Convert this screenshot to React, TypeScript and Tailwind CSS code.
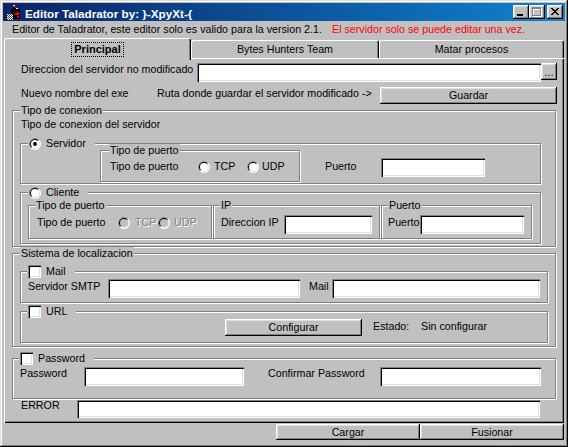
import React from "react";

const sunken =
  "bg-white shadow-[inset_1px_1px_0_#808080,inset_2px_2px_0_#000,inset_-1px_-1px_0_#fff,inset_-2px_-2px_0_#dfdfdf]";
const raised =
  "bg-[#c0c0c0] shadow-[inset_-1px_-1px_0_#000,inset_1px_1px_0_#fff,inset_-2px_-2px_0_#808080,inset_2px_2px_0_#dfdfdf]";
const disabledText = "text-[#808080] [text-shadow:1px_1px_0_#fff]";

function TextBox({ className }: { className: string }) {
  return <div className={`${sunken} shrink-0 ${className}`} />;
}

function Button({ label, className }: { label: string; className: string }) {
  return (
    <div className={`${raised} shrink-0 flex items-center justify-center ${className}`}>
      {label}
    </div>
  );
}

function Radio({ on = false, disabled = false }: { on?: boolean; disabled?: boolean }) {
  return (
    <svg width="12" height="12" viewBox="0 0 12 12" className="shrink-0">
      <circle cx="6" cy="6" r="6" fill="#fff" />
      <path d="M1.757 10.243A6 6 0 0 1 10.243 1.757Z" fill="#808080" />
      <circle cx="6" cy="6" r="5" fill="#dfdfdf" />
      <path d="M2.464 9.536A5 5 0 0 1 9.536 2.464Z" fill="#000" />
      <circle cx="6" cy="6" r="4" fill={disabled ? "#c0c0c0" : "#fff"} />
      {on && <circle cx="6" cy="6" r="2" fill="#000" />}
    </svg>
  );
}

function Check() {
  return <span className={`block w-[13px] h-[13px] shrink-0 ${sunken}`} />;
}

function Frame(props: {
  legend: React.ReactNode;
  className: string;
  legendClass?: string;
  children?: React.ReactNode;
}) {
  return (
    <fieldset
      className={`shrink-0 border border-[#808080] shadow-[inset_1px_1px_0_#fff,1px_1px_0_#fff] ${props.className}`}
    >
      <legend className={`${props.legendClass || "ml-[6px]"} px-[1px] bg-[#c0c0c0] leading-[13px]`}>
        {props.legend}
      </legend>
      {props.children}
    </fieldset>
  );
}

function ControlLegend({ box, text }: { box: React.ReactNode; text: string }) {
  return (
    <span className="flex items-center h-[13px] pr-[8px]">
      {box}
      <span className="ml-[5px]">{text}</span>
    </span>
  );
}

function AppIcon() {
  return (
    <svg width="16" height="16" viewBox="0 0 16 16" shapeRendering="crispEdges" className="shrink-0">
      <rect x="8" y="1" width="2" height="1" fill="#fff" />
      <rect x="9" y="2" width="2" height="1" fill="#d00" />
      <rect x="10" y="3" width="2" height="1" fill="#d00" />
      <rect x="11" y="4" width="2" height="1" fill="#fff" />
      <rect x="6" y="5" width="9" height="10" fill="#000" />
      <rect x="8" y="4" width="3" height="1" fill="#000" />
      <rect x="11" y="8" width="3" height="3" fill="#e00" />
      <rect x="9" y="9" width="2" height="2" fill="#900" />
      <rect x="12" y="12" width="2" height="2" fill="#e00" />
      {[0, 1, 2, 3, 4, 5].map((r) =>
        [0, 1, 2, 3, 4, 5].map((c) => (
          <rect
            key={`${r}-${c}`}
            x={2 + c}
            y={10 + r}
            width="1"
            height="1"
            fill={(r + c) % 2 === 0 ? "#fff" : "#404040"}
          />
        ))
      )}
    </svg>
  );
}

function TitleButtons() {
  return (
    <div className="flex items-center">
      <div className={`${raised} w-[16px] h-[14px]`}>
        <svg width="16" height="14" shapeRendering="crispEdges">
          <rect x="4" y="9" width="6" height="2" fill="#000" />
        </svg>
      </div>
      <div className={`${raised} w-[16px] h-[14px]`}>
        <svg width="16" height="14" shapeRendering="crispEdges">
          <g fill="#fff" transform="translate(1 1)">
            <rect x="3" y="2" width="9" height="2" />
            <rect x="3" y="2" width="1" height="9" />
            <rect x="11" y="2" width="1" height="9" />
            <rect x="3" y="10" width="9" height="1" />
          </g>
          <g fill="#808080">
            <rect x="3" y="2" width="9" height="2" />
            <rect x="3" y="2" width="1" height="9" />
            <rect x="11" y="2" width="1" height="9" />
            <rect x="3" y="10" width="9" height="1" />
          </g>
        </svg>
      </div>
      <div className={`${raised} w-[16px] h-[14px] ml-[2px]`}>
        <svg width="16" height="14" shapeRendering="crispEdges">
          <g fill="#000">
            <rect x="4" y="3" width="2" height="1" />
            <rect x="10" y="3" width="2" height="1" />
            <rect x="5" y="4" width="2" height="1" />
            <rect x="9" y="4" width="2" height="1" />
            <rect x="6" y="5" width="4" height="1" />
            <rect x="7" y="6" width="2" height="1" />
            <rect x="6" y="7" width="4" height="1" />
            <rect x="5" y="8" width="2" height="1" />
            <rect x="9" y="8" width="2" height="1" />
            <rect x="4" y="9" width="2" height="1" />
            <rect x="10" y="9" width="2" height="1" />
          </g>
        </svg>
      </div>
    </div>
  );
}

const TITLE = "Editor Taladrator by: }-XpyXt-{";

export default function App() {
  const tabBase =
    "bg-[#c0c0c0] rounded-t-[3px] border-t border-l border-r border-t-white border-l-white border-r-black shadow-[inset_-1px_0_0_#808080] flex justify-center";

  return (
    <div className="w-[568px] h-[447px] bg-[#c0c0c0] p-[3px] flex flex-col shadow-[inset_-1px_-1px_0_#000,inset_1px_1px_0_#dfdfdf,inset_-2px_-2px_0_#808080,inset_2px_2px_0_#fff] font-['Liberation_Sans',Arial,sans-serif] text-[10.7px] leading-[13px] text-black select-none">
      {/* title bar */}
      <div className="h-[18px] shrink-0 flex items-center bg-linear-to-r from-[#0a246a] to-[#1084d0] px-[2px]">
        <AppIcon />
        <span className="ml-[4px] mt-[2px] flex-1 text-white font-bold text-[11.7px] leading-[13px]">
          {TITLE}
        </span>
        <TitleButtons />
      </div>

      {/* info line */}
      <div className="mt-[2px] pl-[9px] flex whitespace-nowrap">
        <span className="w-[320px] shrink-0">
          Editor de Taladrator, este editor solo es valido para la version 2.1.
        </span>
        <span className="text-[#ff0000]">El servidor solo se puede editar una vez.</span>
      </div>

      {/* tabs */}
      <div className="mt-[2px] h-[20px] flex items-end pl-[1px] shrink-0">
        <div className={`${tabBase} relative z-10 w-[187px] h-[22px] -mb-[2px] pt-[2px] items-start`}>
          <span className="mt-[1px] px-[2px] border border-dotted border-black font-bold text-[11px] leading-[13px]">
            Principal
          </span>
        </div>
        <div className={`${tabBase} w-[188px] h-[18px] items-center`}>Bytes Hunters Team</div>
        <div className={`${tabBase} w-[185px] h-[18px] items-center`}>Matar procesos</div>
      </div>

      {/* panel */}
      <div className="ml-[1px] w-[560px] h-[365px] shrink-0 flex flex-col shadow-[inset_1px_1px_0_#fff,inset_-1px_-1px_0_#000,inset_-2px_-2px_0_#808080]">
        <div className="mt-[5px] pl-[17px] flex items-start">
          <span className="w-[176px] shrink-0">Direccion del servidor no modificado</span>
          <TextBox className="w-[344px] h-[19px]" />
          <Button label="..." className="w-[16px] h-[17px] items-end pb-[1px]" />
        </div>

        <div className="mt-[5px] pl-[17px] flex items-start">
          <span className="w-[136px] shrink-0">Nuevo nombre del exe</span>
          <span className="w-[223px] shrink-0">Ruta donde guardar el servidor modificado -&gt;</span>
          <Button label="Guardar" className="w-[177px] h-[17px]" />
        </div>

        <Frame legend="Tipo de conexion" legendClass="ml-[7px]" className="ml-[8px] w-[544px] pb-[2px]">
          <div className="mt-[1px] pl-[8px]">Tipo de conexion del servidor</div>

          <Frame
            legend={<ControlLegend box={<Radio on />} text="Servidor" />}
            legendClass="ml-[7px]"
            className="mt-[6px] ml-[7px] w-[521px] pb-[1px]"
          >
            <div className="-mt-[6px] flex items-start">
              <Frame legend="Tipo de puerto" legendClass="ml-[8px]" className="ml-[79px] w-[200px] pb-[8px]">
                <div className="mt-[3px] pl-[9px] h-[13px] flex items-center">
                  <span className="w-[88px] shrink-0">Tipo de puerto</span>
                  <span className="w-[49px] shrink-0 flex items-center">
                    <Radio />
                    <span className="ml-[4px]">TCP</span>
                  </span>
                  <span className="flex items-center">
                    <Radio />
                    <span className="ml-[3px]">UDP</span>
                  </span>
                </div>
              </Frame>
              <div className="ml-[25px] mt-[14px] flex items-start">
                <span className="mt-[2px] w-[56px] shrink-0">Puerto</span>
                <TextBox className="w-[104px] h-[19px]" />
              </div>
            </div>
          </Frame>

          <Frame
            legend={<ControlLegend box={<Radio />} text="Cliente" />}
            legendClass="ml-[7px]"
            className="mt-[2px] ml-[7px] w-[521px] pb-[4px]"
          >
            <div className="flex items-start">
              <Frame legend="Tipo de puerto" className="ml-[7px] w-[184px] pb-[4px]">
                <div className="mt-[3px] pl-[8px] h-[19px] flex items-start">
                  <span className="mt-[1px] w-[81px] shrink-0">Tipo de puerto</span>
                  <span className="mt-[1px] h-[13px] w-[40px] shrink-0 flex items-center">
                    <Radio disabled />
                    <span className={`ml-[5px] ${disabledText}`}>TCP</span>
                  </span>
                  <span className="mt-[1px] h-[13px] flex items-center">
                    <Radio disabled />
                    <span className={`ml-[4px] ${disabledText}`}>UDP</span>
                  </span>
                </div>
              </Frame>
              <Frame legend="IP" className="ml-[1px] w-[167px] pb-[4px]">
                <div className="mt-[3px] pl-[7px] flex items-start">
                  <span className="mt-[1px] w-[63px] shrink-0">Direccion IP</span>
                  <TextBox className="w-[88px] h-[19px]" />
                </div>
              </Frame>
              <Frame legend="Puerto" className="ml-[1px] w-[151px] pb-[4px]">
                <div className="mt-[3px] pl-[6px] flex items-start">
                  <span className="mt-[1px] w-[32px] shrink-0">Puerto</span>
                  <TextBox className="w-[104px] h-[19px]" />
                </div>
              </Frame>
            </div>
          </Frame>
        </Frame>

        <Frame legend="Sistema de localizacion" legendClass="ml-[7px]" className="ml-[8px] w-[544px] pb-[3px]">
          <Frame
            legend={<ControlLegend box={<Check />} text="Mail" />}
            className="mt-[5px] ml-[7px] w-[528px] pb-[4px]"
          >
            <div className="mt-[1px] pl-[7px] flex items-start">
              <span className="mt-[1px] w-[80px] shrink-0">Servidor SMTP</span>
              <TextBox className="w-[192px] h-[19px]" />
              <span className="ml-[9px] mt-[1px] w-[23px] shrink-0">Mail</span>
              <TextBox className="w-[208px] h-[19px]" />
            </div>
          </Frame>
          <Frame
            legend={<ControlLegend box={<Check />} text="URL" />}
            className="mt-[2px] ml-[7px] w-[528px] pb-[6px]"
          >
            <div className="mt-[1px] pl-[204px] flex items-start">
              <Button label="Configurar" className="w-[137px] h-[17px]" />
              <span className="ml-[11px] mt-[1px] w-[48px] shrink-0">Estado:</span>
              <span className="mt-[1px]">Sin configurar</span>
            </div>
          </Frame>
        </Frame>

        <Frame
          legend={<ControlLegend box={<Check />} text="Password" />}
          className="mt-[5px] ml-[8px] w-[544px] pb-[12px]"
        >
          <div className="mt-[2px] pl-[7px] flex items-start">
            <span className="w-[64px] shrink-0">Password</span>
            <TextBox className="w-[160px] h-[19px]" />
            <span className="ml-[24px] w-[112px] shrink-0">Confirmar Password</span>
            <TextBox className="w-[161px] h-[19px]" />
          </div>
        </Frame>

        <div className="mt-[1px] pl-[17px] flex items-start">
          <span className="-mt-[1px] w-[56px] shrink-0">ERROR</span>
          <TextBox className="w-[463px] h-[18px]" />
        </div>
      </div>

      {/* bottom buttons */}
      <div className="mt-[1px] pr-[1px] flex justify-end">
        <Button label="Cargar" className="w-[144px] h-[16px]" />
        <Button label="Fusionar" className="w-[144px] h-[16px]" />
      </div>
    </div>
  );
}
